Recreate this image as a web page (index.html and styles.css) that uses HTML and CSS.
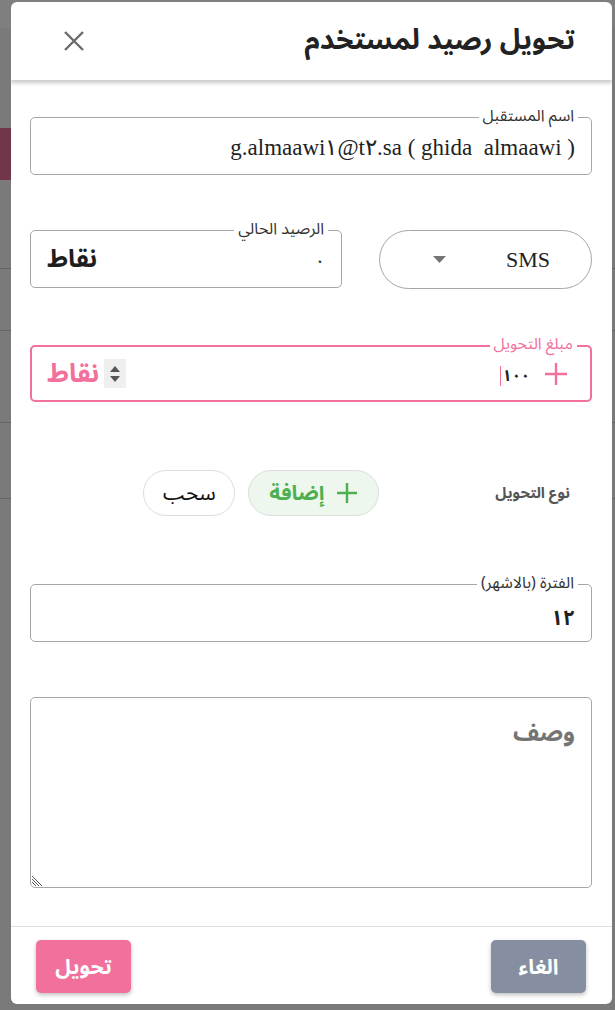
FILE: index.html
```html
<!DOCTYPE html>
<html lang="ar" dir="rtl">
<head>
<meta charset="utf-8">
<title>تحويل رصيد لمستخدم</title>
<link rel="stylesheet" href="styles.css">
</head>
<body>
<div class="page">
  <div class="page-top"></div>
  <div class="page-pink"></div>
  <div class="page-line l1"></div>
  <div class="page-line l2"></div>
  <div class="page-line l3"></div>
  <div class="page-line l4"></div>
</div>
<div class="backdrop">
  <div class="dialog">
    <header class="dlg-head">
      <h1 class="dlg-title">تحويل رصيد لمستخدم</h1>
      <button class="close" aria-label="close">
        <svg width="22" height="22" viewBox="0 0 22 22"><path d="M2 2 L20 20 M20 2 L2 20" stroke="#6b6b6b" stroke-width="2.4" fill="none"/></svg>
      </button>
    </header>
    <div class="dlg-body">
      <div class="field f-name">
        <span class="flabel">اسم المستقبل</span>
        <span class="fvalue serif" dir="ltr">g.almaawi١@t٢.sa ( ghida&nbsp;&nbsp;almaawi )</span>
      </div>

      <div class="row2">
        <div class="select-pill">
          <span class="serif sms">SMS</span>
          <svg class="caret" width="13" height="7" viewBox="0 0 13 7"><path d="M0 0 H13 L6.5 7 Z" fill="#757575"/></svg>
        </div>
        <div class="field f-bal">
          <span class="flabel">الرصيد الحالي</span>
          <span class="bal-zero">٠</span>
          <span class="unit">نقاط</span>
        </div>
      </div>

      <div class="field f-amount">
        <span class="flabel pink">مبلغ التحويل</span>
        <svg class="plus" width="24" height="24" viewBox="0 0 24 24"><path d="M12 1 V23 M1 12 H23" stroke="#f2709c" stroke-width="2.4" fill="none"/></svg>
        <span class="amount">١٠٠</span>
        <span class="cursor"></span>
        <span class="spacer"></span>
        <span class="spin">
          <svg width="12" height="24" viewBox="0 0 12 24"><path d="M1 10 L6 4 L11 10 Z M1 14 L11 14 L6 20 Z" fill="#555"/></svg>
        </span>
        <span class="unit pink">نقاط</span>
      </div>

      <div class="type-row">
        <span class="type-label">نوع التحويل</span>
        <div class="pills">
          <button class="pill add">
            <svg width="22" height="22" viewBox="0 0 22 22"><path d="M11 1 V21 M1 11 H21" stroke="#4caf50" stroke-width="2.4" fill="none"/></svg>
            <span>إضافة</span>
          </button>
          <button class="pill withdraw">سحب</button>
        </div>
      </div>

      <div class="field f-period">
        <span class="flabel">الفترة (بالاشهر)</span>
        <span class="period">١٢</span>
      </div>

      <div class="textarea">
        <span class="placeholder">وصف</span>
        <svg class="grip" width="10" height="10" viewBox="0 0 10 10"><path d="M0 3 L7 10 M0 6 L4 10 M0 0 L10 10" stroke="#555" stroke-width="1" fill="none"/></svg>
      </div>
    </div>
    <footer class="dlg-foot">
      <button class="btn cancel">الغاء</button>
      <button class="btn submit">تحويل</button>
    </footer>
  </div>
</div>
</body>
</html>
```
FILE: styles.css
```css
* { box-sizing: border-box; }
html, body { margin: 0; padding: 0; }
body {
  width: 615px;
  height: 1010px;
  overflow: hidden;
  background: #ffffff;
  font-family: "Noto Sans Arabic", "DejaVu Sans", sans-serif;
  position: relative;
}
.page { width: 615px; height: 1010px; position: relative; background: #f4f4f4; }
.page-top { height: 28px; background: #ffffff; }
.page-pink { position: absolute; left: 0; top: 128px; width: 30px; height: 52px; background: #e46d96; }
.page-line { position: absolute; left: 0; width: 615px; height: 1px; background: #c8c8c8; }
.l1 { top: 268px; } .l2 { top: 330px; } .l3 { top: 422px; } .l4 { top: 498px; }

.backdrop {
  position: absolute;
  inset: 0;
  background: rgba(0,0,0,0.5);
  padding: 2px 3px 6px 11px;
  display: flex;
}
.dialog {
  width: 601px;
  height: 1002px;
  background: #fff;
  border-radius: 6px;
  display: flex;
  flex-direction: column;
  overflow: hidden;
}
.dlg-head {
  height: 78px;
  flex: none;
  display: flex;
  align-items: center;
  justify-content: space-between;
  padding: 0 37px 0 52px;
  box-shadow: 0 3px 4px rgba(0,0,0,0.22);
  position: relative;
  z-index: 1;
}
.dlg-title {
  margin: 0;
  font-size: 28px;
  font-weight: 700;
  color: #222;
  line-height: 1;
}
.close { border: 0; background: none; padding: 0; display: flex; cursor: pointer; }

.dlg-body {
  flex: 1;
  padding: 37px 20px 0 19px;
  display: flex;
  flex-direction: column;
}
.serif { font-family: "Liberation Serif", serif; }
.field {
  position: relative;
  height: 58px;
  border: 1px solid #a6a6a6;
  border-radius: 5px;
  display: flex;
  align-items: center;
  padding: 0 16px 0 16px;
}
.flabel {
  position: absolute;
  top: -10px;
  right: 13px;
  background: #fff;
  padding: 0 4px;
  font-size: 16px;
  line-height: 16px;
  height: 16px;
  color: #333;
}
.fvalue { font-size: 23px; line-height: 1; color: #222; padding-top: 2px; }

.row2 {
  margin-top: 55px;
  display: flex;
  gap: 37px;
}
.select-pill {
  width: 213px;
  height: 59px;
  border: 1px solid #a6a6a6;
  border-radius: 30px;
  display: flex;
  align-items: center;
  padding: 0 41px 0 0;
  gap: 60px;
}
.sms { font-size: 22px; color: #222; line-height: 1; }
.f-bal { flex: 1; justify-content: flex-start; }
.bal-zero { font-size: 18px; line-height: 1; color: #222; padding-top: 4px; }
.unit { margin-right: auto; font-size: 25px; font-weight: 700; color: #1e1e1e; line-height: 1; }

.f-amount {
  margin-top: 56px;
  height: 57px;
  border: 2px solid #f2709c;
  padding: 0 22px 0 15px;
}
.flabel.pink { color: #f2709c; top: -11px; }
.pink { color: #f2709c; }
.plus { flex: none; }
.amount { font-size: 16px; line-height: 1; color: #222; margin-right: 14px; font-weight: 700; padding-top: 4px; }
.cursor { width: 1px; height: 20px; background: #f2709c; margin-right: 2px; margin-top: 4px; }
.spacer { flex: 1; }
.spin {
  width: 22px; height: 29px; background: #efefef;
  display: flex; align-items: center; justify-content: center;
}
.f-amount .unit { margin-right: 5px; font-size: 26px; }

.type-row {
  margin-top: 68px;
  height: 46px;
  display: flex;
  align-items: center;
  padding-right: 22px;
}
.type-label { font-size: 15px; font-weight: 700; color: #555; }
.pills { display: flex; gap: 13px; margin-right: 116px; }
.pill {
  height: 46px;
  border: 1px solid #dcdcdc;
  border-radius: 23px;
  font-family: inherit;
  font-size: 21px;
  display: flex;
  align-items: center;
  justify-content: center;
  gap: 12px;
  padding: 0;
}
.pill.add { width: 131px; background: #eef7ed; color: #4caf50; font-weight: 700; }
.pill.withdraw { width: 92px; background: #fff; color: #111; }

.f-period { margin-top: 68px; }
.period { font-size: 21px; line-height: 1; font-weight: 700; color: #222; padding-top: 10px; }

.textarea {
  margin-top: 55px;
  height: 191px;
  border: 1px solid #a6a6a6;
  border-radius: 5px;
  position: relative;
  padding: 10px 16px;
}
.placeholder { font-size: 24px; color: #666; font-weight: 700; opacity: 0.9; }
.grip { position: absolute; left: 1px; bottom: 1px; }

.dlg-foot {
  flex: none;
  height: 78px;
  border-top: 1px solid #dedede;
  display: flex;
  align-items: flex-start;
  justify-content: space-between;
  padding: 13px 26px 0 25px;
}
.btn {
  width: 95px;
  height: 53px;
  border: 0;
  border-radius: 5px;
  color: #fff;
  font-family: inherit;
  font-size: 21px;
  font-weight: 700;
  box-shadow: 0 2px 4px rgba(0,0,0,0.25);
}
.cancel { background: #868fa1; }
.submit { background: #f2709c; }
```
